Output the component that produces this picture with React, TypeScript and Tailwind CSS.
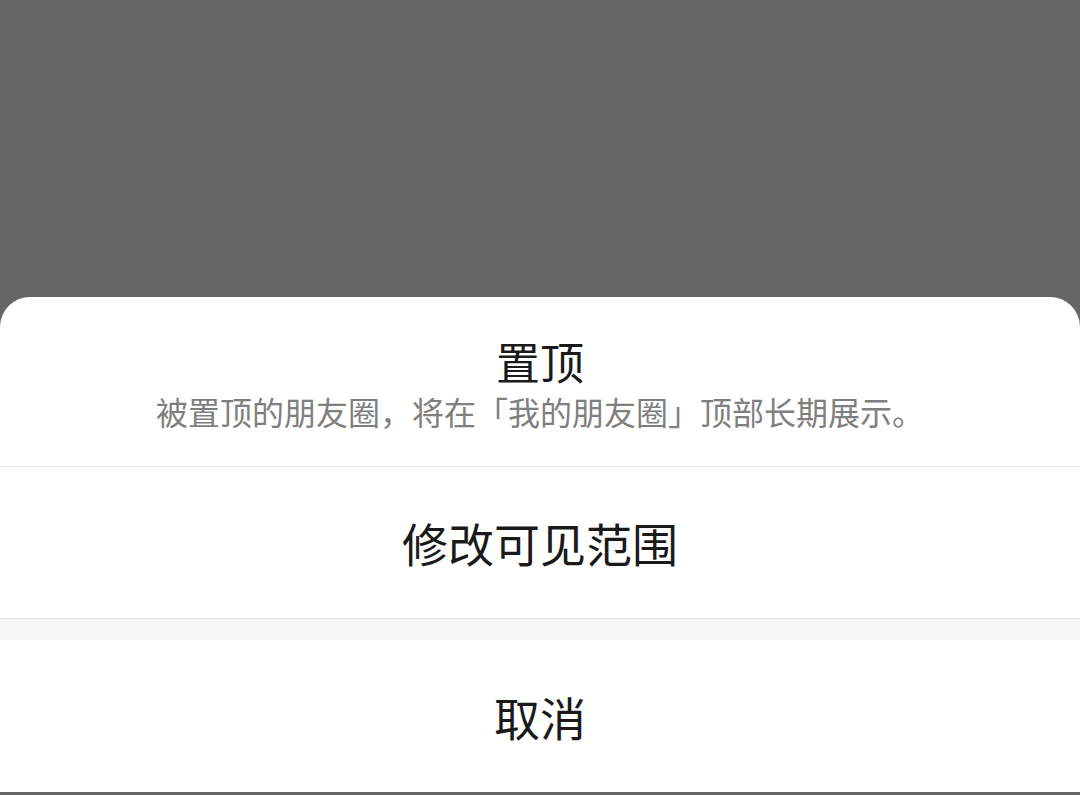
export default function App() {
  const font = {
    fontFamily: '"Noto Sans CJK SC", "Noto Sans", sans-serif',
  };
  return (
    <div
      className="flex h-[795px] w-full flex-col justify-end bg-[#666666] pb-[3px]"
      style={font}
    >
      <div className="overflow-hidden rounded-t-[30px] bg-white">
        <div className="flex h-[170px] flex-col items-center justify-center border-b border-[#e5e5e5] pt-[2px]">
          <span className="text-[44px] leading-[56px] text-[#1a1a1a]">
            置顶
          </span>
          <span className="text-[32px] leading-[44px] text-[#7f7f7f]">
            被置顶的朋友圈，将在「我的朋友圈」顶部长期展示。
          </span>
        </div>
        <div className="flex h-[152px] items-center justify-center border-b border-[#e5e5e5] text-[46px] text-[#1a1a1a]">
          修改可见范围
        </div>
        <div className="h-[21px] bg-[#f6f6f6]" />
        <div className="flex h-[152px] items-center justify-center text-[46px] text-[#1a1a1a]">
          取消
        </div>
      </div>
    </div>
  );
}
